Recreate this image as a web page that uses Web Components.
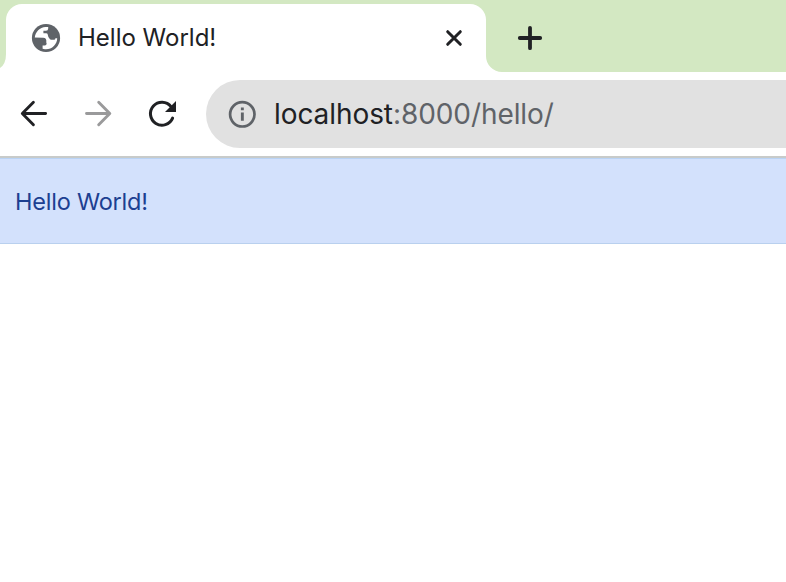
<!DOCTYPE html>
<html lang="en"><head><meta charset="utf-8"><title>Hello World!</title>
<style>body{margin:0;background:#fff;font-family:Inter,"Liberation Sans",sans-serif}</style></head>
<body>
<browser-window>
<browser-tab slot="tabs">Hello World!</browser-tab>
<browser-toolbar slot="toolbar"><address-bar><span slot="host">localhost</span><span slot="path">:8000/hello/</span></address-bar></browser-toolbar>
<message-banner>Hello World!</message-banner>
</browser-window>
<script>
const define = (name, html) => {
  const t = document.createElement('template');
  t.innerHTML = html;
  customElements.define(name, class extends HTMLElement {
    constructor() {
      super();
      this.attachShadow({mode: 'open'}).append(t.content.cloneNode(true));
    }
  });
};
define('browser-window', `<style>
:host{display:flex;flex-direction:column;height:582px;overflow:hidden;background:#fff}
.strip{height:72px;background:#d3e8c2;display:flex;align-items:flex-end;box-sizing:border-box}
.left{width:6px;height:68px;display:block;flex:none}
.right{width:16px;height:68px;flex:none}
.plus{width:26px;height:26px;margin:0 0 21px 15px}
</style>
<div class="strip">
<svg class="left" viewBox="0 0 6 68"><path d="M6 50Q6 60 0 64V68H6Z" fill="#fff"/></svg>
<slot name="tabs"></slot>
<svg class="right" viewBox="0 0 16 68"><path d="M0 52A16 16 0 0 0 16 68H0Z" fill="#fff"/></svg>
<svg class="plus" viewBox="0 0 26 26"><path d="M13 2.8V23.2M2.8 13H23.2" stroke="#202124" stroke-width="3.8" stroke-linecap="round"/></svg>
</div><slot name="toolbar"></slot><slot></slot>`);
define('browser-tab', `<style>
:host{display:flex;align-items:center;box-sizing:border-box;width:480px;height:68px;background:#fff;border-radius:16px 16px 0 0;padding:0 22px 0 26px;color:#202124;font-size:24px}
.globe{width:28px;height:28px;margin-right:18px;flex:none;overflow:visible}
span{flex:1;white-space:nowrap;line-height:30px}
.close{width:20px;height:20px;flex:none}
</style>
<svg class="globe" viewBox="0 0 28 28"><circle cx="14" cy="14" r="14.1" fill="#5f6368"/><path d="M2.8 13.6C3 8 8 3.2 13.5 2.9L16.2 3.1V4.4Q16.2 6.6 14 6.7H11.4V9.2H14.3Q15.9 9.3 15.9 11.2Q16 13.4 18 15.2Q18.8 15.8 20.3 15.8H22Q23.4 15.7 23.4 14.2H25.2C25.2 20.5 19.5 25.8 13 25.2L10.6 24.7V21.4H12.8Q14.6 21.3 14.6 19.4V18.8H14.2Q15.1 13.8 11.2 13.7Z" fill="#fff"/></svg>
<span><slot></slot></span>
<svg class="close" viewBox="0 0 20 20"><path d="M3.7 3.7L16.3 16.3M16.3 3.7L3.7 16.3" stroke="#202124" stroke-width="3" stroke-linecap="round"/></svg>`);
define('browser-toolbar', `<style>
:host{display:flex;align-items:center;box-sizing:border-box;height:84px;padding-left:18px}
svg{width:32px;height:32px;margin-right:32px;flex:none;fill:none;stroke:#202124;stroke-width:2.9;stroke-linecap:round;stroke-linejoin:round}
.forward{stroke:#9a9a9b}
svg.reload{margin-right:28px;stroke-linecap:round}
::slotted(*){flex:1}
</style>
<svg viewBox="0 0 32 32"><path d="M27.6 15.5H4.6M15.4 4.3L4.3 15.5L15.4 26.7"/></svg>
<svg class="forward" viewBox="0 0 32 32"><path d="M4.5 15.5H27.4M16.7 4.3L27.8 15.5L16.7 26.7"/></svg>
<svg class="reload" viewBox="0 0 32 32"><path d="M26.6 20.1A11.5 11.5 0 1 1 25 8.6" stroke-width="3"/><path d="M30 3V14H19Z" fill="#202124" stroke="none"/></svg>
<slot></slot>`);
define('address-bar', `<style>
:host{display:flex;align-items:center;box-sizing:border-box;height:68px;background:#e1e1e1;border-radius:34px 0 0 34px;padding-left:22px;font-size:28px;letter-spacing:-.08px}
svg{width:28px;height:28px;margin-right:18px;flex:none}
.url{white-space:nowrap;line-height:36px;color:#5f6368}
.host{color:#202124}
</style>
<svg viewBox="0 0 28 28"><circle cx="14.3" cy="14.3" r="12.2" fill="none" stroke="#5f6368" stroke-width="2.7"/><path d="M12.9 7.4h2.9v2.8h-2.9zM12.9 12.6h2.9v8.1h-2.9z" fill="#5f6368"/></svg>
<div class="url"><span class="host"><slot name="host"></slot></span><slot name="path"></slot></div>`);
define('message-banner', `<style>
:host{display:flex;align-items:center;box-sizing:border-box;height:88px;border-top:2px solid #c8cbca;border-bottom:1px solid #b9d0ee;box-shadow:inset 0 1px #b9d3f5;background:#d3e1fc;background-clip:padding-box;padding:3px 0 0 15px;color:#1c3f91;font-size:23.5px;letter-spacing:-.22px;line-height:30px}
</style><slot></slot>`);
</script>
</body></html>
